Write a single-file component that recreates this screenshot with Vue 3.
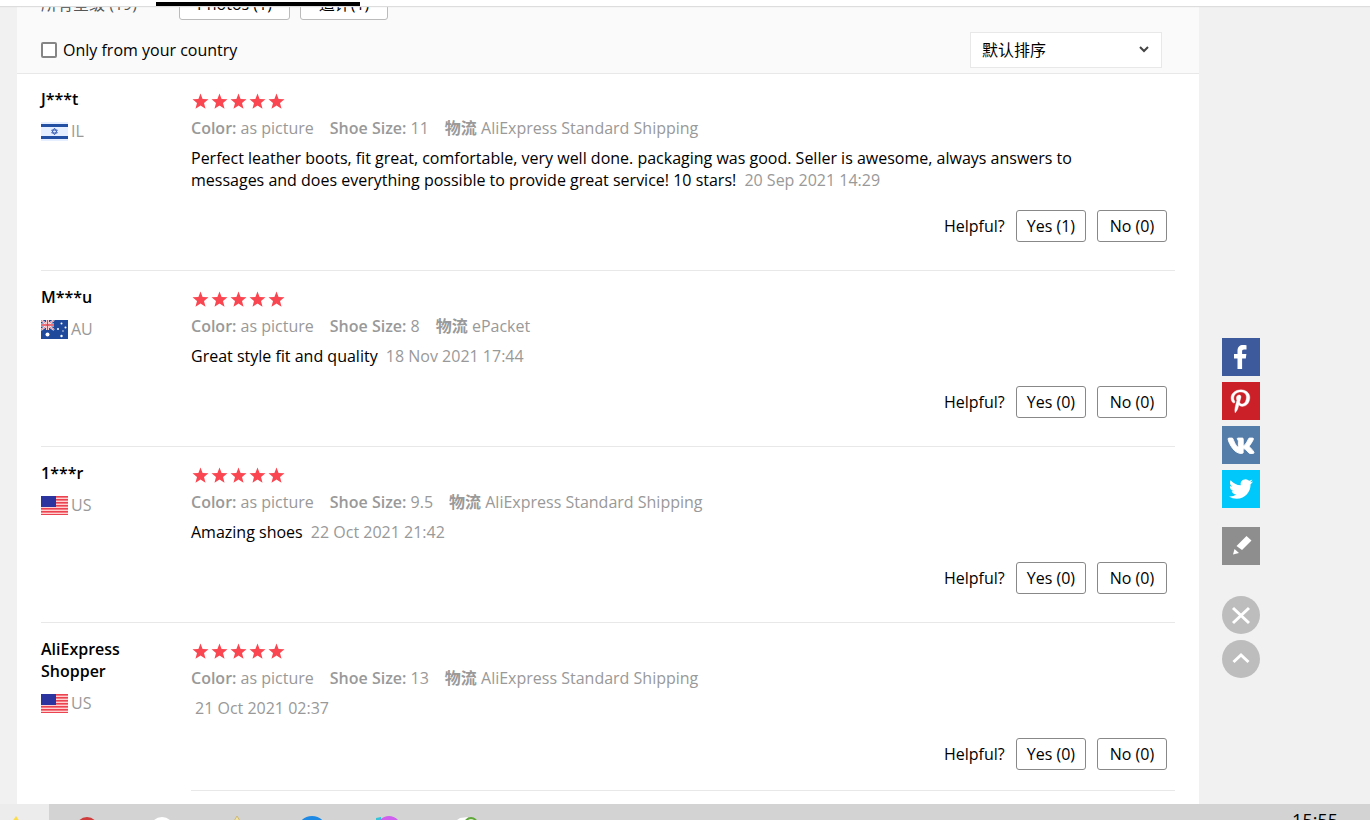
<script setup>
  import { ref } from 'vue'

  const onlyCountry = ref(false)
  const sort = ref('default')

  const reviews = ref([
    {
      id: 1, name: 'J***t', country: 'IL', size: '11', shipping: 'AliExpress Standard Shipping',
      text: 'Perfect leather boots, fit great, comfortable, very well done. packaging was good. Seller is awesome, always answers to messages and does everything possible to provide great service! 10 stars!',
      date: '20 Sep 2021 14:29', yes: 1, no: 0
    },
    {
      id: 2, name: 'M***u', country: 'AU', size: '8', shipping: 'ePacket',
      text: 'Great style fit and quality', date: '18 Nov 2021 17:44', yes: 0, no: 0
    },
    {
      id: 3, name: '1***r', country: 'US', size: '9.5', shipping: 'AliExpress Standard Shipping',
      text: 'Amazing shoes', date: '22 Oct 2021 21:42', yes: 0, no: 0
    },
    {
      id: 4, name: 'AliExpress Shopper', country: 'US', size: '13', shipping: 'AliExpress Standard Shipping',
      text: '', date: '21 Oct 2021 02:37', yes: 0, no: 0, additional: true
    }
  ])
</script>

<template>
  <div class="page">
    <div class="top-bar">
      <div class="active-tab"></div>
    </div>

    <div class="main-content">
      <div class="panel">
        <div class="filters">
          <div class="filter-row">
            <button class="star-filter">
              所有星级 (19)
              <svg width="8" height="6" viewBox="0 0 8 6"><path d="M1 1l3 3 3-3" fill="none" stroke="#888" /></svg>
            </button>
            <button class="chip photos">Photos (1)</button>
            <button class="chip">追评(1)</button>
          </div>
          <div class="sort-row">
            <label class="country-check">
              <input v-model="onlyCountry" type="checkbox" />
              Only from your country
            </label>
            <div class="sort">
              <select v-model="sort" aria-label="Sort">
                <option value="default">默认排序</option>
                <option value="latest">最新</option>
              </select>
              <svg width="10" height="8" viewBox="0 0 10 8"><path d="M1 1l4 4 4-4" fill="none" stroke="#444" stroke-width="2" /></svg>
            </div>
          </div>
        </div>

        <div class="reviews">
          <div v-for="review in reviews" :key="review.id" class="review">
            <div class="user">
              <div class="user-name">{{ review.name }}</div>
              <div class="user-country">
                <svg v-if="review.country === 'IL'" class="flag" viewBox="0 0 27 19">
                  <rect width="27" height="19" fill="#e6efff" />
                  <rect y="2" width="27" height="3" fill="#2450a4" />
                  <rect y="14" width="27" height="3" fill="#2450a4" />
                  <path d="M13.500 6.200l2.800 4.800h-5.600zM13.500 12.800l-2.800-4.800h5.600z" fill="none" stroke="#3d62b8" />
                </svg>
                <svg v-else-if="review.country === 'AU'" class="flag" viewBox="0 0 27 19">
                  <rect width="27" height="19" fill="#1f4a9c" />
                  <path d="M0 0l13 10M13 0L0 10" stroke="#fff" stroke-width="2" />
                  <path d="M0 0l13 10M13 0L0 10" stroke="#e0525e" stroke-width="0.800" />
                  <path d="M6.500 0v10M0 5h13" stroke="#fff" stroke-width="3" />
                  <path d="M6.500 0v10M0 5h13" stroke="#e0404c" stroke-width="1.500" />
                  <g fill="#fff">
                    <circle cx="6.500" cy="14.500" r="2" />
                    <circle cx="20.500" cy="3.500" r="1" />
                    <circle cx="17" cy="9" r="1" />
                    <circle cx="24.500" cy="7.500" r="1" />
                    <circle cx="22" cy="11" r="0.700" />
                    <circle cx="20.500" cy="16" r="1.200" />
                  </g>
                </svg>
                <svg v-else class="flag" viewBox="0 0 27 19">
                  <rect width="27" height="19" fill="#ffd0d0" />
                  <rect v-for="n in 7" :key="n" :y="(n - 1) * 3" width="27" height="1.600" fill="#ec4350" />
                  <rect width="15" height="11" fill="#2c34a0" />
                </svg>
                {{ review.country }}
              </div>
            </div>

            <div class="feedback">
              <div class="stars">
                <svg v-for="n in 5" :key="n" viewBox="0 0 19 19">
                  <path d="M9.500 1.500l2.100 5.400 5.900.4-4.500 3.700 1.500 5.800-5-3.200-5 3.200 1.500-5.800-4.500-3.700 5.900-.4z" fill="#fa4650" />
                </svg>
              </div>
              <div class="info">
                <span><strong>Color:</strong> as picture</span>
                <span><strong>Shoe Size:</strong> {{ review.size }}</span>
                <span><strong>物流</strong> {{ review.shipping }}</span>
              </div>
              <div class="comment">
                {{ review.text }} <span class="date">{{ review.date }}</span>
              </div>
              <div class="helpful">
                <span>Helpful?</span>
                <button>Yes ({{ review.yes }})</button>
                <button>No ({{ review.no }})</button>
              </div>
              <div v-if="review.additional" class="additional"></div>
            </div>
          </div>
        </div>
      </div>

      <div class="share">
        <a href="#" class="facebook" aria-label="Facebook">
          <svg viewBox="0 0 38 38"><path d="M15.500 31V20.500H12V16h3.500v-3.200C15.500 9 17.700 7 21.100 7c1.600 0 2.900.1 3.400.2v4.200h-2.300c-1.800 0-2.100.9-2.100 2.200V16h4.300l-.6 4.500h-3.700V31z" fill="#fff" /></svg>
        </a>
        <a href="#" class="pinterest" aria-label="Pinterest">
          <svg viewBox="0 0 38 38"><path transform="translate(9 7.500) scale(.049 .046)" d="M204 6.500C101.400 6.500 0 74.900 0 185.600 0 256 39.600 296 63.600 296c9.900 0 15.600-27.600 15.600-35.400 0-9.300-23.700-29.100-23.700-67.800 0-80.400 61.200-137.400 140.400-137.400 68.100 0 118.500 38.700 118.500 109.800 0 53.100-21.300 152.700-90.300 152.700-24.900 0-46.200-18-46.200-43.800 0-37.800 26.400-74.400 26.400-113.400 0-66.200-93.900-54.200-93.900 25.800 0 16.800 2.100 35.400 9.600 50.700-13.800 59.400-42 147.900-42 209.100 0 18.900 2.700 37.500 4.500 56.400 3.400 3.800 1.700 3.400 6.900 1.500 50.400-69 48.600-82.500 71.400-172.800 12.300 23.400 44.100 36 69.300 36 106.200 0 153.900-103.500 153.900-196.800C384 71.300 298.200 6.500 204 6.500z" fill="#fff" stroke="#fff" stroke-width="8" /></svg>
        </a>
        <a href="#" class="vk" aria-label="VK">
          <svg viewBox="0 0 38 38"><path transform="translate(5.200 7.500) scale(.048)" d="M545 117.700c3.700-12.500 0-21.700-17.800-21.700h-58.900c-15 0-21.900 7.900-25.600 16.700 0 0-30 73.100-72.400 120.500-13.700 13.700-20 18.100-27.500 18.100-3.700 0-9.400-4.400-9.400-16.900V117.700c0-15-4.200-21.700-16.600-21.700h-92.600c-9.400 0-15 7-15 13.500 0 14.200 21.200 17.500 23.400 57.500v86.800c0 19-3.400 22.500-10.900 22.500-20 0-68.600-73.400-97.400-157.400-5.800-16.300-11.500-22.900-26.600-22.900H38.800c-16.800 0-20.200 7.900-20.200 16.700 0 15.600 20 93.100 93.100 195.500C160.400 378.100 229 416 291.400 416c37.500 0 42.100-8.400 42.100-22.900 0-66.800-3.400-73.100 15.400-73.100 8.700 0 23.700 4.400 58.700 38.100 40 40 46.600 57.900 69 57.900h58.900c16.800 0 25.300-8.400 20.400-25-11.200-34.900-86.900-106.700-90.300-111.500-8.700-11.200-6.200-16.200 0-26.200.1-.1 72-101.300 79.400-135.600z" fill="#fff" stroke="#fff" stroke-width="20" /></svg>
        </a>
        <a href="#" class="twitter" aria-label="Twitter">
          <svg viewBox="0 0 38 38"><path transform="translate(7 7)" d="M23.953 4.570a10 10 0 01-2.825.775 4.958 4.958 0 002.163-2.723c-.951.555-2.005.959-3.127 1.184a4.920 4.920 0 00-8.384 4.482C7.690 8.095 4.067 6.130 1.640 3.162a4.822 4.822 0 00-.666 2.475c0 1.710.870 3.213 2.188 4.096a4.904 4.904 0 01-2.228-.616v.060a4.923 4.923 0 003.946 4.827 4.996 4.996 0 01-2.212.085 4.936 4.936 0 004.604 3.417 9.867 9.867 0 01-6.102 2.105c-.390 0-.779-.023-1.170-.067a13.995 13.995 0 007.557 2.209c9.053 0 13.998-7.496 13.998-13.985 0-.210 0-.420-.015-.630A9.935 9.935 0 0024 4.590z" fill="#fff" /></svg>
        </a>
        <button class="edit" aria-label="Feedback">
          <svg viewBox="0 0 38 38"><path d="M14.500 19l10-10 5 4.500-9.500 9.500zM12.500 22l4.500 4-6 1.500z" fill="#fff" /></svg>
        </button>
        <button class="round close" aria-label="Close">
          <svg viewBox="0 0 38 38"><path d="M11 12l16 15M27 12l-16 15" fill="none" stroke="#fff" stroke-width="3" /></svg>
        </button>
        <button class="round" aria-label="Back to top">
          <svg viewBox="0 0 38 38"><path d="M11.500 22l7.500-7 7.500 7" fill="none" stroke="#fff" stroke-width="3" /></svg>
        </button>
      </div>
    </div>

    <div class="taskbar">
      <div class="start">
        <svg width="49" height="16" viewBox="0 0 49 16"><path d="M16 11l4 6h-8z" fill="#fbdc4a" /></svg>
      </div>
      <svg class="apps" width="440" height="16" viewBox="49 0 440 16">
        <circle cx="87" cy="24" r="11" fill="#d03c3c" />
        <circle cx="162" cy="25" r="12" fill="#fff" />
        <path d="M237 12l3 5h-6z" fill="#f3e3a0" stroke="#cdb978" />
        <circle cx="312" cy="27" r="15" fill="#1e88e5" />
        <path d="M376 14l5-1v4h-5z" fill="#35c4d8" />
        <circle cx="389" cy="24" r="12" fill="#cf5fee" />
        <path d="M457 16l3-2 8-1-2 4z" fill="#fff" />
        <circle cx="471" cy="20" r="6" fill="#d8ecc6" stroke="#5fa83a" stroke-width="2" />
      </svg>
      <div class="clock">15:55</div>
    </div>
  </div>
</template>

<style>
  body {
    margin: 0;
    background: #f1f1f1;
  }
</style>

<style scoped>
  .page {
    height: 100vh;
    display: flex;
    flex-direction: column;
    background: #f1f1f1;
    color: #000;
    font-family: "Open Sans", "Noto Sans CJK SC", sans-serif;
    font-size: 16px;
    line-height: 22px;
  }

  button, select {
    font: inherit;
    color: inherit;
    box-sizing: border-box;
  }

  .top-bar {
    height: 6px;
    flex: none;
    display: flex;
    align-items: flex-end;
    background: #fff;
    box-shadow: 0 1px 1px #ddd;
    z-index: 1;
  }

  .active-tab {
    width: 204px;
    height: 4px;
    margin-left: 156px;
    background: #000;
  }

  .main-content {
    flex: 1;
    min-height: 0;
    display: flex;
    overflow: hidden;
  }

  .panel {
    flex: 1;
    margin-left: 17px;
    background: #fff;
  }

  .filters {
    padding: 0 37px 5px 24px;
    background: #fafafa;
    box-shadow: 0 1px 0 #e8e8e8;
  }

  .filter-row {
    height: 14px;
    display: flex;
    align-items: flex-end;
  }

  .star-filter {
    display: flex;
    align-items: center;
    gap: 10px;
    width: 138px;
    height: 32px;
    padding: 0;
    border: 0;
    background: none;
    color: #555;
    white-space: nowrap;
  }

  .chip {
    width: 88px;
    height: 32px;
    padding: 0;
    border: 1px solid #bbb;
    border-radius: 3px;
    background: #fff;
  }

  .photos {
    width: 111px;
    margin-right: 10px;
  }

  .sort-row {
    display: flex;
    align-items: center;
    justify-content: space-between;
    margin-top: 12px;
  }

  .country-check {
    display: flex;
    align-items: center;
    gap: 6px;
  }

  .country-check input {
    appearance: none;
    width: 16px;
    height: 16px;
    margin: 0;
    border: 2px solid #858585;
    border-radius: 2px;
    background: #fff;
  }

  .sort {
    display: grid;
    align-items: center;
    width: 192px;
  }

  .sort select, .sort svg {
    grid-area: 1 / 1;
  }

  .sort select {
    appearance: none;
    height: 36px;
    padding: 0 11px;
    border: 1px solid #e8e8e8;
    border-radius: 0;
    background: #fff;
  }

  .sort svg {
    justify-self: end;
    margin-right: 13px;
    pointer-events: none;
  }

  .reviews {
    padding: 0 24px;
  }

  .review {
    display: flex;
    border-bottom: 1px solid #e8e8e8;
  }

  .user {
    width: 110px;
    padding: 15px 40px 0 0;
  }

  .user-name {
    font-weight: 600;
  }

  .user-country {
    display: flex;
    align-items: center;
    gap: 3px;
    margin-top: 10px;
    color: #999;
    font-weight: 500;
  }

  .flag {
    width: 27px;
    height: 19px;
  }

  .feedback {
    flex: 1;
    padding: 17px 0 28px;
  }

  .stars {
    display: flex;
    align-items: center;
    height: 22px;
  }

  .stars svg {
    width: 19px;
    height: 19px;
  }

  .info {
    display: flex;
    gap: 16px;
    margin-top: 5px;
    color: #999;
  }

  .info strong {
    font-weight: 600;
  }

  .comment {
    margin-top: 8px;
    padding-right: 80px;
  }

  .date {
    margin-left: 4px;
    color: #999;
  }

  .helpful {
    display: flex;
    align-items: center;
    justify-content: flex-end;
    gap: 11px;
    margin: 19px 8px 0 0;
  }

  .helpful button {
    min-width: 70px;
    height: 32px;
    padding: 0 10px;
    border: 1px solid #888;
    border-radius: 3px;
    background: #fff;
  }

  .additional {
    height: 20px;
    margin-top: 20px;
    border-top: 1px solid #e8e8e8;
  }

  .share {
    flex: none;
    display: flex;
    flex-direction: column;
    gap: 6px;
    width: 38px;
    padding: 332px 110px 0 23px;
  }

  .share a, .share button {
    display: block;
    width: 38px;
    height: 38px;
    padding: 0;
    border: 0;
  }

  .share svg {
    display: block;
  }

  .facebook {
    background: #3d5a9c;
  }

  .pinterest {
    background: #cb2027;
  }

  .vk {
    background: #557da9;
  }

  .twitter {
    background: #00c8fa;
  }

  .share .edit {
    margin-top: 13px;
    background: #8e8e8e;
  }

  .share .round {
    border-radius: 50%;
    background: #bdbdbd;
  }

  .share .close {
    margin-top: 25px;
  }

  .taskbar {
    flex: none;
    display: flex;
    height: 16px;
    overflow: hidden;
    background: #d3d3d3;
  }

  .start {
    width: 49px;
    background: #ececec;
  }

  .clock {
    margin: 5px 32px 0 auto;
    font-size: 18px;
  }
</style>
